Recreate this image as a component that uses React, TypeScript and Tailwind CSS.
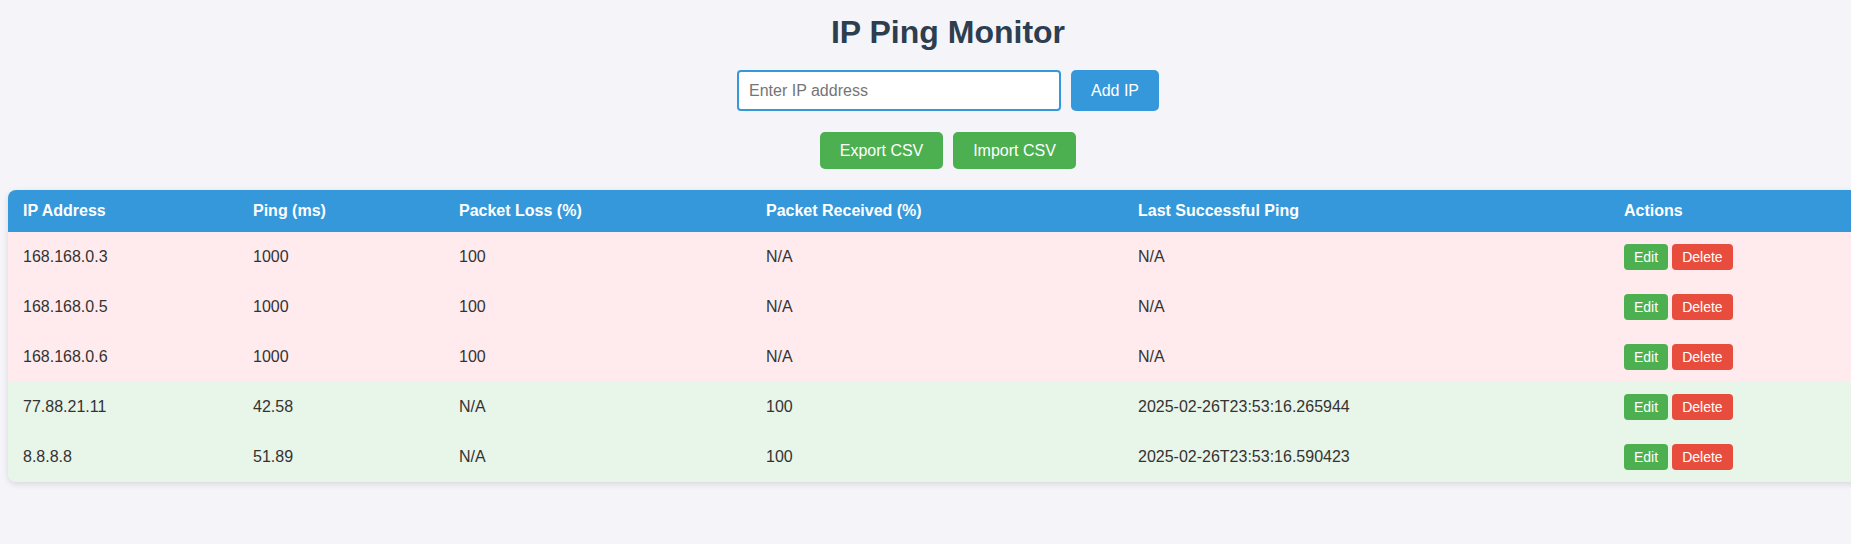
const rows = [
  { ip: "168.168.0.3", ping: "1000", loss: "100", recv: "N/A", last: "N/A", ok: false },
  { ip: "168.168.0.5", ping: "1000", loss: "100", recv: "N/A", last: "N/A", ok: false },
  { ip: "168.168.0.6", ping: "1000", loss: "100", recv: "N/A", last: "N/A", ok: false },
  { ip: "77.88.21.11", ping: "42.58", loss: "N/A", recv: "100", last: "2025-02-26T23:53:16.265944", ok: true },
  { ip: "8.8.8.8", ping: "51.89", loss: "N/A", recv: "100", last: "2025-02-26T23:53:16.590423", ok: true },
];

export default function App() {
  return (
    <div className="min-h-screen w-full overflow-hidden bg-[#f4f4f9] font-['Liberation_Sans',Arial,sans-serif] text-[#333]">
      <div className="ml-2 w-[1880px]">
        <h1 className="pt-[14px] text-center text-[32px] font-bold leading-[37px] text-[#2c3e50]">
          IP Ping Monitor
        </h1>

        <div className="mt-[19px] flex h-[41px] justify-center">
          <input
            type="text"
            placeholder="Enter IP address"
            className="w-[324px] rounded-[4px] border-2 border-[#3498db] bg-white px-[10px] text-[16px] outline-none placeholder:text-[#757575]"
          />
          <button className="ml-[10px] w-[88px] rounded-[5px] bg-[#3498db] text-[16px] text-white">
            Add IP
          </button>
        </div>

        <div className="mt-[21px] flex justify-center gap-[10px]">
          <button className="h-[37px] w-[123px] rounded-[5px] bg-[#4caf50] text-[16px] text-white">
            Export CSV
          </button>
          <button className="h-[37px] w-[123px] rounded-[5px] bg-[#4caf50] text-[16px] text-white">
            Import CSV
          </button>
        </div>

        <div className="mt-[21px] overflow-hidden rounded-[8px] shadow-[0_2px_6px_rgba(0,0,0,0.12)]">
          <table className="w-[1880px] table-fixed border-collapse text-left text-[16px]">
            <colgroup>
              <col className="w-[230px]" />
              <col className="w-[206px]" />
              <col className="w-[307px]" />
              <col className="w-[372px]" />
              <col className="w-[486px]" />
              <col className="w-[279px]" />
            </colgroup>
            <thead>
              <tr className="h-[42px] bg-[#3498db] text-white">
                <th className="px-[15px] font-bold">IP Address</th>
                <th className="px-[15px] font-bold">Ping (ms)</th>
                <th className="px-[15px] font-bold">Packet Loss (%)</th>
                <th className="px-[15px] font-bold">Packet Received (%)</th>
                <th className="px-[15px] font-bold">Last Successful Ping</th>
                <th className="px-[15px] font-bold">Actions</th>
              </tr>
            </thead>
            <tbody>
              {rows.map((r) => (
                <tr key={r.ip} className={r.ok ? "h-[50px] bg-[#e8f5e9]" : "h-[50px] bg-[#ffebee]"}>
                  <td className="px-[15px]">{r.ip}</td>
                  <td className="px-[15px]">{r.ping}</td>
                  <td className="px-[15px]">{r.loss}</td>
                  <td className="px-[15px]">{r.recv}</td>
                  <td className="px-[15px]">{r.last}</td>
                  <td className="px-[15px]">
                    <div className="flex gap-[4px]">
                      <button className="h-[26px] rounded-[4px] bg-[#4caf50] px-[10px] text-[14px] text-white">
                        Edit
                      </button>
                      <button className="h-[26px] rounded-[4px] bg-[#e74c3c] px-[10px] text-[14px] text-white">
                        Delete
                      </button>
                    </div>
                  </td>
                </tr>
              ))}
            </tbody>
          </table>
        </div>
      </div>
    </div>
  );
}
